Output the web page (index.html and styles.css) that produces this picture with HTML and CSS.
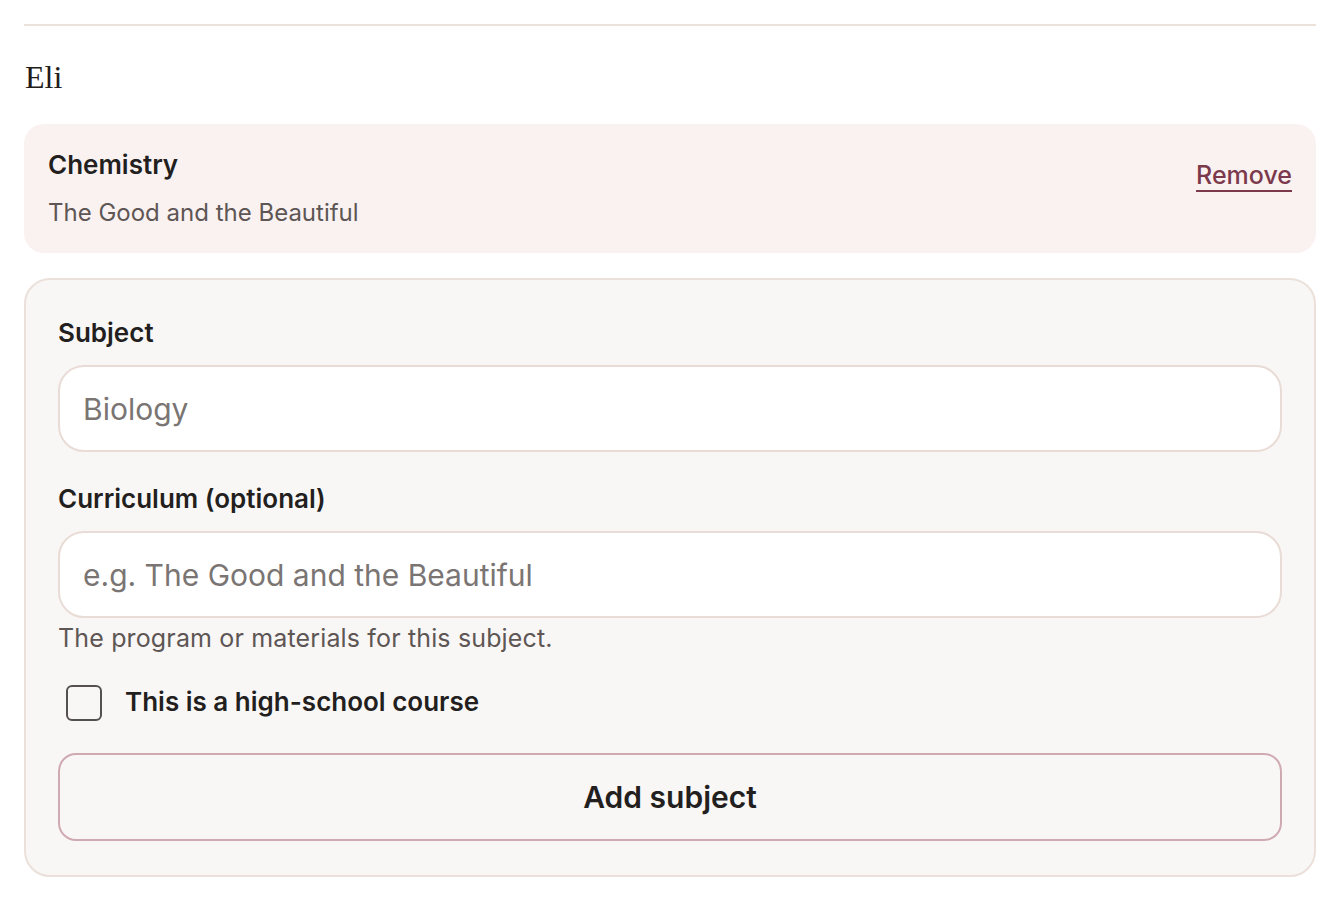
FILE: index.html
```html
<!DOCTYPE html>
<html lang="en">
<head>
<meta charset="utf-8">
<title>Eli – subjects</title>
<link rel="stylesheet" href="styles.css">
</head>
<body>
<section class="student">
  <h2 class="student-name">Eli</h2>
  <div class="subject-card">
    <div class="subject-info">
      <div class="subject-title">Chemistry</div>
      <div class="subject-curriculum">The Good and the Beautiful</div>
    </div>
    <button class="remove-btn" type="button">Remove</button>
  </div>
  <form class="add-form">
    <div class="field">
      <label class="field-label" for="subject">Subject</label>
      <input class="field-input" id="subject" type="text" placeholder="Biology">
    </div>
    <div class="field field-second">
      <label class="field-label" for="curriculum">Curriculum (optional)</label>
      <input class="field-input" id="curriculum" type="text" placeholder="e.g. The Good and the Beautiful">
      <p class="field-help">The program or materials for this subject.</p>
    </div>
    <label class="check-row">
      <span class="check-box"></span>
      <span class="check-label">This is a high-school course</span>
    </label>
    <button class="add-btn" type="button">Add subject</button>
  </form>
</section>
</body>
</html>
```
FILE: styles.css
```css
* { box-sizing: border-box; }

html, body {
  margin: 0;
  background: #ffffff;
}

body {
  padding: 24px;
  font-family: "Inter", "Noto Sans", sans-serif;
  color: #231f1e;
}

.student {
  border-top: 2px solid #ece2dc;
}

.student-name {
  margin: 31px 0 27px 1px;
  font-family: "Liberation Serif", serif;
  font-weight: 400;
  font-size: 32px;
  line-height: 40px;
  color: #221c1b;
}

.subject-card {
  display: flex;
  justify-content: space-between;
  align-items: flex-start;
  background: #f9f2f1;
  border-radius: 20px;
  padding: 25px 24px 24px 24px;
}

.subject-info {
  display: flex;
  flex-direction: column;
  gap: 16px;
}

.subject-title {
  font-size: 26px;
  font-weight: 600;
  line-height: 32px;
  color: #231f1e;
}

.subject-curriculum {
  font-size: 24px;
  line-height: 32px;
  color: #5e5654;
}

.remove-btn {
  margin-top: 10px;
  padding: 0;
  border: none;
  background: none;
  font-family: inherit;
  font-size: 25px;
  font-weight: 500;
  line-height: 32px;
  color: #7b3a4c;
  text-decoration: underline;
  text-decoration-thickness: 2px;
  text-underline-offset: 6px;
  cursor: pointer;
}

.add-form {
  margin-top: 25px;
  background: #f9f7f6;
  border: 2px solid #ebe0da;
  border-radius: 26px;
  padding: 37px 32px 34px 32px;
  display: flex;
  flex-direction: column;
}

.field {
  display: flex;
  flex-direction: column;
}

.field-second {
  margin-top: 31px;
}

.field-label {
  font-size: 26px;
  font-weight: 600;
  line-height: 32px;
  margin-bottom: 16px;
  color: #231f1e;
}

.field-input {
  height: 87px;
  width: 100%;
  border: 2px solid #e9dcd6;
  border-radius: 26px;
  background: #ffffff;
  padding: 0 23px;
  font-family: inherit;
  font-size: 30px;
  color: #231f1e;
  outline: none;
}

.field-input::placeholder {
  color: #7a7573;
}

.field-help {
  margin: 4px 0 0 0;
  font-size: 25px;
  letter-spacing: 0.15px;
  line-height: 32px;
  color: #5e5654;
}

.check-row {
  margin-top: 31px;
  display: flex;
  align-items: center;
  gap: 23px;
  padding-left: 8px;
  height: 36px;
}

.check-box {
  width: 36px;
  height: 36px;
  border: 2px solid #55504f;
  border-radius: 6px;
  background: transparent;
  flex: none;
}

.check-label {
  font-size: 26px;
  font-weight: 600;
  line-height: 32px;
  color: #231f1e;
  position: relative;
  top: -1px;
}

.add-btn {
  margin-top: 32px;
  height: 88px;
  width: 100%;
  border: 2px solid #cfaab1;
  border-radius: 18px;
  background: #f9f7f6;
  font-family: inherit;
  font-size: 30px;
  font-weight: 600;
  color: #231f1e;
  cursor: pointer;
}
```
